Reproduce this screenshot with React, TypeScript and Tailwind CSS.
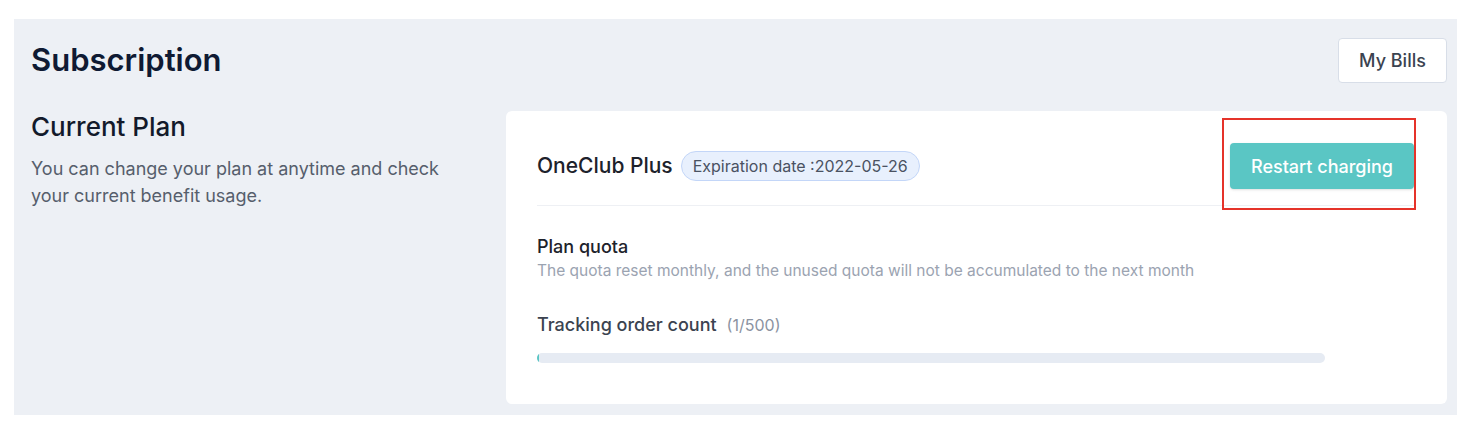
import React from "react";

const FONT = "font-['Inter','Noto_Sans',sans-serif]";

function ProgressRow({ label, used, total }: { label: string; used: number; total: number }) {
  const pct = Math.max((used / total) * 100, 0.3);
  return (
    <div className="mt-8">
      <p className="text-[18px] leading-6 text-[#3b4350] font-medium">
        {label}
        <span className="ml-2.5 text-[16px] font-normal text-[#8b93a1]">
          ({used}/{total})
        </span>
      </p>
      <div className="mt-4 h-[10px] w-[788px] rounded-full bg-[#e6ebf3] overflow-hidden">
        <div className="h-full rounded-full bg-[#5ac6c4]" style={{ width: `${pct}%` }} />
      </div>
    </div>
  );
}

export default function App() {
  return (
    <div className={`min-h-screen bg-white pt-[19px] pb-[19px] pl-[14px] pr-[11px] ${FONT}`}>
      <div className="bg-[#edf0f5] pl-[17px] pr-[10px] pt-[19px] pb-[11px]">
        <header className="flex items-center justify-between h-[45px]">
          <h1 className="text-[31px] font-semibold text-[#0f1a33]">Subscription</h1>
          <button className="h-[45px] w-[109px] rounded bg-white border border-[#d8dee8] text-[18px] font-medium text-[#3b4350]">
            My Bills
          </button>
        </header>

        <div className="flex mt-7">
          <div className="w-[475px] shrink-0 pr-[25px]">
            <h2 className="text-[26px] leading-8 font-medium text-[#131a2b]">Current Plan</h2>
            <p className="mt-3 text-[18px] leading-[27px] text-[#565e6c]">
              You can change your plan at anytime and check your current benefit usage.
            </p>
          </div>

          <section className="relative flex-1 rounded-md bg-white pl-[31px] pr-[33px] pt-8 pb-[41px]">
            <div className="flex items-center justify-between pb-4 border-b border-[#eef0f4]">
              <div className="flex items-center gap-2">
                <span className="text-[21px] font-medium text-[#1d222b]">OneClub Plus</span>
                <span className="h-[30px] px-[11px] flex items-center rounded-full bg-[#e8f0fd] border border-[#c3d6f8] text-[16px] text-[#4a5262]">
                  Expiration date :2022-05-26
                </span>
              </div>
              <button className="h-[46px] w-[184px] rounded bg-[#5ac6c4] text-white text-[18px] font-medium shadow-sm">
                Restart charging
              </button>
            </div>

            <div className="pt-[29px]">
              <p className="text-[18px] leading-6 font-medium text-[#1d222b]">Plan quota</p>
              <p className="mt-0.5 text-[15.5px] leading-5 text-[#9ba3b1]">
                The quota reset monthly, and the unused quota will not be accumulated to the next month
              </p>
            </div>

            <ProgressRow label="Tracking order count" used={1} total={500} />

            <div className="absolute top-[7px] right-[31px] w-[194px] h-[92px] border-2 border-[#e5332a] pointer-events-none" />
          </section>
        </div>
      </div>
    </div>
  );
}
